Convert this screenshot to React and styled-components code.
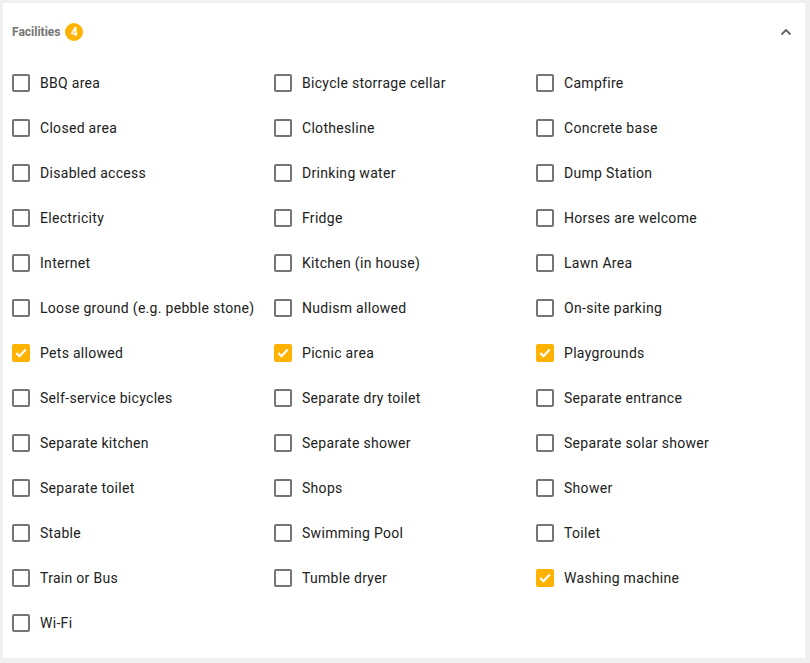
import React, { useState } from 'react';
import styled, { createGlobalStyle } from 'styled-components';

const GlobalStyle = createGlobalStyle`
  html, body {
    margin: 0;
    padding: 0;
    background: #f0f0f0;
    font-family: Roboto, "Liberation Sans", sans-serif;
  }
`;

const Page = styled.div`
  padding: 3px;
`;

const Card = styled.section`
  width: 802px;
  height: 655px;
  background: #ffffff;
  box-sizing: border-box;
  padding: 0 13px 12px 9px;
`;

const Header = styled.div`
  height: 57px;
  display: flex;
  align-items: center;
  justify-content: space-between;
`;

const Title = styled.div`
  display: flex;
  align-items: center;
  gap: 5px;
  font-size: 12px;
  font-weight: 700;
  color: #757575;
`;

const Badge = styled.span`
  width: 18px;
  height: 18px;
  border-radius: 50%;
  background: #ffb300;
  color: #fff;
  font-size: 12px;
  font-weight: 700;
  display: inline-flex;
  align-items: center;
  justify-content: center;
`;

const Toggle = styled.button`
  border: 0;
  background: none;
  padding: 0;
  display: flex;
  cursor: pointer;
  color: #616161;
`;

const Grid = styled.div`
  display: grid;
  grid-template-columns: repeat(3, 262px);
  grid-auto-rows: 45px;
`;

const Item = styled.label`
  display: flex;
  align-items: center;
  gap: 10px;
  font-size: 14px;
  color: #212121;
  cursor: pointer;
  letter-spacing: 0.3px;
`;

const Box = styled.span`
  width: 18px;
  height: 18px;
  box-sizing: border-box;
  border-radius: 2px;
  border: 2px solid ${p => (p.$checked ? '#ffb300' : '#757575')};
  background: ${p => (p.$checked ? '#ffb300' : '#fff')};
  display: inline-flex;
  align-items: center;
  justify-content: center;
  flex: none;
`;

const items = [
  'BBQ area', 'Bicycle storrage cellar', 'Campfire',
  'Closed area', 'Clothesline', 'Concrete base',
  'Disabled access', 'Drinking water', 'Dump Station',
  'Electricity', 'Fridge', 'Horses are welcome',
  'Internet', 'Kitchen (in house)', 'Lawn Area',
  'Loose ground (e.g. pebble stone)', 'Nudism allowed', 'On-site parking',
  'Pets allowed', 'Picnic area', 'Playgrounds',
  'Self-service bicycles', 'Separate dry toilet', 'Separate entrance',
  'Separate kitchen', 'Separate shower', 'Separate solar shower',
  'Separate toilet', 'Shops', 'Shower',
  'Stable', 'Swimming Pool', 'Toilet',
  'Train or Bus', 'Tumble dryer', 'Washing machine',
  'Wi-Fi',
];

const initial = ['Pets allowed', 'Picnic area', 'Playgrounds', 'Washing machine'];

export default function App() {
  const [checked, setChecked] = useState(initial);
  const toggle = name =>
    setChecked(c => (c.includes(name) ? c.filter(n => n !== name) : [...c, name]));

  return (
    <Page>
      <GlobalStyle />
      <Card>
        <Header>
          <Title>
            Facilities
            <Badge>{checked.length}</Badge>
          </Title>
          <Toggle aria-label="collapse">
            <svg width="12" height="8" viewBox="0 0 12 8">
              <path d="M1.5 6.5 L6 2 L10.5 6.5" fill="none" stroke="currentColor" strokeWidth="1.8" />
            </svg>
          </Toggle>
        </Header>
        <Grid>
          {items.map(name => {
            const on = checked.includes(name);
            return (
              <Item key={name} onClick={() => toggle(name)}>
                <Box $checked={on}>
                  {on && (
                    <svg width="12" height="10" viewBox="0 0 12 10">
                      <path d="M1.3 5 L4.5 8.2 L10.7 1.6" fill="none" stroke="#fff" strokeWidth="2.2" />
                    </svg>
                  )}
                </Box>
                {name}
              </Item>
            );
          })}
        </Grid>
      </Card>
    </Page>
  );
}
